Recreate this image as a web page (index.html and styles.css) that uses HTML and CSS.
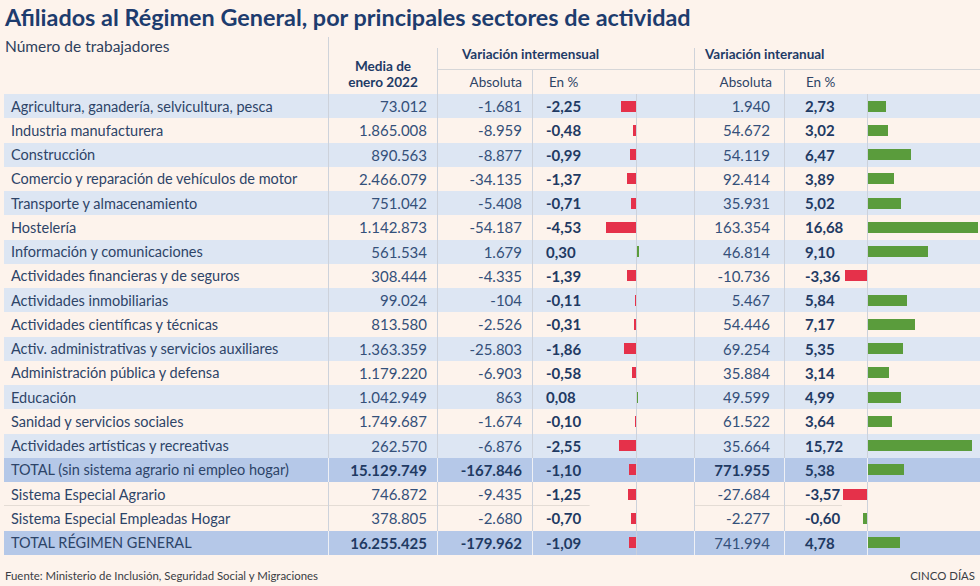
FILE: index.html
```html
<!DOCTYPE html>
<html lang="es">
<head>
<meta charset="utf-8">
<title>Afiliados al Régimen General</title>
<link rel="stylesheet" href="styles.css">
</head>
<body>
<div class="page">
  <h1 class="title">Afiliados al Régimen General, por principales sectores de actividad</h1>
  <div class="head">
    <div class="h-lab">Número de trabajadores</div>
    <div class="h-media"><span>Media de</span><span>enero 2022</span></div>
    <div class="h-group g1">Variación intermensual</div>
    <div class="h-group g2">Variación interanual</div>
    <div class="h-sub s-abs">Absoluta</div>
    <div class="h-sub s-pct">En %</div>
    <div class="h-sub s-fill"></div>
    <div class="h-sub s-abs2">Absoluta</div>
    <div class="h-sub s-pct2">En %</div>
    <div class="h-sub s-last"></div>
  </div>
  <div class="body">
    <div class="row alt"><div class="c lab">Agricultura, ganadería, selvicultura, pesca</div><div class="c num">73.012</div><div class="c num">-1.681</div><div class="c pct"><b>-2,25</b><i class="bar neg" style="width:14.9px"></i></div><div class="c fill"></div><div class="c num2">1.940</div><div class="c pct2"><b>2,73</b></div><div class="c last"><i class="bar pos" style="width:18px"></i></div></div>
    <div class="row"><div class="c lab">Industria manufacturera</div><div class="c num">1.865.008</div><div class="c num">-8.959</div><div class="c pct"><b>-0,48</b><i class="bar neg" style="width:3.2px"></i></div><div class="c fill"></div><div class="c num2">54.672</div><div class="c pct2"><b>3,02</b></div><div class="c last"><i class="bar pos" style="width:19.9px"></i></div></div>
    <div class="row alt"><div class="c lab">Construcción</div><div class="c num">890.563</div><div class="c num">-8.877</div><div class="c pct"><b>-0,99</b><i class="bar neg" style="width:6.5px"></i></div><div class="c fill"></div><div class="c num2">54.119</div><div class="c pct2"><b>6,47</b></div><div class="c last"><i class="bar pos" style="width:42.7px"></i></div></div>
    <div class="row"><div class="c lab">Comercio y reparación de vehículos de motor</div><div class="c num">2.466.079</div><div class="c num">-34.135</div><div class="c pct"><b>-1,37</b><i class="bar neg" style="width:9px"></i></div><div class="c fill"></div><div class="c num2">92.414</div><div class="c pct2"><b>3,89</b></div><div class="c last"><i class="bar pos" style="width:25.7px"></i></div></div>
    <div class="row alt"><div class="c lab">Transporte y almacenamiento</div><div class="c num">751.042</div><div class="c num">-5.408</div><div class="c pct"><b>-0,71</b><i class="bar neg" style="width:4.7px"></i></div><div class="c fill"></div><div class="c num2">35.931</div><div class="c pct2"><b>5,02</b></div><div class="c last"><i class="bar pos" style="width:33.1px"></i></div></div>
    <div class="row"><div class="c lab">Hostelería</div><div class="c num">1.142.873</div><div class="c num">-54.187</div><div class="c pct"><b>-4,53</b><i class="bar neg" style="width:29.9px"></i></div><div class="c fill"></div><div class="c num2">163.354</div><div class="c pct2"><b>16,68</b></div><div class="c last"><i class="bar pos" style="width:110px"></i></div></div>
    <div class="row alt"><div class="c lab">Información y comunicaciones</div><div class="c num">561.534</div><div class="c num">1.679</div><div class="c pct"><b>0,30</b></div><div class="c fill"><i class="bar pos" style="width:2px"></i></div><div class="c num2">46.814</div><div class="c pct2"><b>9,10</b></div><div class="c last"><i class="bar pos" style="width:60px"></i></div></div>
    <div class="row"><div class="c lab">Actividades financieras y de seguros</div><div class="c num">308.444</div><div class="c num">-4.335</div><div class="c pct"><b>-1,39</b><i class="bar neg" style="width:9.2px"></i></div><div class="c fill"></div><div class="c num2">-10.736</div><div class="c pct2"><b>-3,36</b><i class="bar neg" style="width:22.2px"></i></div><div class="c last"></div></div>
    <div class="row alt"><div class="c lab">Actividades inmobiliarias</div><div class="c num">99.024</div><div class="c num">-104</div><div class="c pct"><b>-0,11</b><i class="bar neg" style="width:0.7px"></i></div><div class="c fill"></div><div class="c num2">5.467</div><div class="c pct2"><b>5,84</b></div><div class="c last"><i class="bar pos" style="width:38.5px"></i></div></div>
    <div class="row"><div class="c lab">Actividades científicas y técnicas</div><div class="c num">813.580</div><div class="c num">-2.526</div><div class="c pct"><b>-0,31</b><i class="bar neg" style="width:2px"></i></div><div class="c fill"></div><div class="c num2">54.446</div><div class="c pct2"><b>7,17</b></div><div class="c last"><i class="bar pos" style="width:47.3px"></i></div></div>
    <div class="row alt"><div class="c lab">Activ. administrativas y servicios auxiliares</div><div class="c num">1.363.359</div><div class="c num">-25.803</div><div class="c pct"><b>-1,86</b><i class="bar neg" style="width:12.3px"></i></div><div class="c fill"></div><div class="c num2">69.254</div><div class="c pct2"><b>5,35</b></div><div class="c last"><i class="bar pos" style="width:35.3px"></i></div></div>
    <div class="row"><div class="c lab">Administración pública y defensa</div><div class="c num">1.179.220</div><div class="c num">-6.903</div><div class="c pct"><b>-0,58</b><i class="bar neg" style="width:3.8px"></i></div><div class="c fill"></div><div class="c num2">35.884</div><div class="c pct2"><b>3,14</b></div><div class="c last"><i class="bar pos" style="width:20.7px"></i></div></div>
    <div class="row alt"><div class="c lab">Educación</div><div class="c num">1.042.949</div><div class="c num">863</div><div class="c pct"><b>0,08</b></div><div class="c fill"><i class="bar pos" style="width:0.5px"></i></div><div class="c num2">49.599</div><div class="c pct2"><b>4,99</b></div><div class="c last"><i class="bar pos" style="width:32.9px"></i></div></div>
    <div class="row"><div class="c lab">Sanidad y servicios sociales</div><div class="c num">1.749.687</div><div class="c num">-1.674</div><div class="c pct"><b>-0,10</b><i class="bar neg" style="width:0.7px"></i></div><div class="c fill"></div><div class="c num2">61.522</div><div class="c pct2"><b>3,64</b></div><div class="c last"><i class="bar pos" style="width:24px"></i></div></div>
    <div class="row alt"><div class="c lab">Actividades artísticas y recreativas</div><div class="c num">262.570</div><div class="c num">-6.876</div><div class="c pct"><b>-2,55</b><i class="bar neg" style="width:16.8px"></i></div><div class="c fill"></div><div class="c num2">35.664</div><div class="c pct2"><b>15,72</b></div><div class="c last"><i class="bar pos" style="width:103.8px"></i></div></div>
    <div class="row total"><div class="c lab">TOTAL (sin sistema agrario ni empleo hogar)</div><div class="c num"><b>15.129.749</b></div><div class="c num"><b>-167.846</b></div><div class="c pct"><b>-1,10</b><i class="bar neg" style="width:7.3px"></i></div><div class="c fill"></div><div class="c num2"><b>771.955</b></div><div class="c pct2"><b>5,38</b></div><div class="c last"><i class="bar pos" style="width:35.5px"></i></div></div>
    <div class="row ruled"><div class="c lab">Sistema Especial Agrario</div><div class="c num">746.872</div><div class="c num">-9.435</div><div class="c pct"><b>-1,25</b><i class="bar neg" style="width:8.3px"></i></div><div class="c fill"></div><div class="c num2">-27.684</div><div class="c pct2"><b>-3,57</b><i class="bar neg" style="width:23.6px"></i></div><div class="c last"></div></div>
    <div class="row"><div class="c lab">Sistema Especial Empleadas Hogar</div><div class="c num">378.805</div><div class="c num">-2.680</div><div class="c pct"><b>-0,70</b><i class="bar neg" style="width:4.6px"></i></div><div class="c fill"></div><div class="c num2">-2.277</div><div class="c pct2"><b>-0,60</b><i class="bar pos" style="width:4px"></i></div><div class="c last"></div></div>
    <div class="row total"><div class="c lab">TOTAL RÉGIMEN GENERAL</div><div class="c num"><b>16.255.425</b></div><div class="c num"><b>-179.962</b></div><div class="c pct"><b>-1,09</b><i class="bar neg" style="width:7.2px"></i></div><div class="c fill"></div><div class="c num2">741.994</div><div class="c pct2"><b>4,78</b></div><div class="c last"><i class="bar pos" style="width:31.5px"></i></div></div>
  </div>
  <div class="foot">
    <span>Fuente: Ministerio de Inclusión, Seguridad Social y Migraciones</span>
    <span>CINCO DÍAS</span>
  </div>
</div>
</body>
</html>
```
FILE: styles.css
```css
html, body {
  margin: 0;
  padding: 0;
  background: #fdf3ec;
}
body {
  font-family: "Lato", "Liberation Sans", sans-serif;
  color: #2c4468;
  width: 980px;
  height: 586px;
  overflow: hidden;
}
.page {
  padding: 0 0 0 4px;
}
.title {
  margin: 0;
  padding: 3px 0 0 1px;
  height: 34px;
  box-sizing: border-box;
  font-size: 23.4px;
  line-height: 28px;
  font-weight: 700;
  color: #1d3c6e;
  white-space: nowrap;
}
.head {
  display: grid;
  grid-template-columns: 325px 109px 95px 104px 58px 90px 83px 1fr;
  grid-template-rows: 33px 24px;
  height: 57px;
  margin-top: 3px;
}
.h-lab {
  grid-column: 1;
  grid-row: 1 / 3;
  font-size: 15.5px;
  line-height: 18px;
  padding-left: 1px;
  border-right: 1px solid #cfd3da;
  color: #2e3f5c;
}
.h-media {
  grid-column: 2;
  grid-row: 1 / 3;
  margin-top: 11px;
  border-right: 1px solid #cfd3da;
  display: flex;
  flex-direction: column;
  align-items: center;
  justify-content: flex-end;
  font-size: 13.6px;
  line-height: 16px;
  font-weight: 700;
  color: #1f3b66;
  padding-bottom: 4px;
}
.h-media span {
  display: block;
  height: 16px;
}
.h-group {
  grid-row: 1;
  margin-top: 11px;
  border-bottom: 1px solid #d6d6d8;
  font-size: 13.5px;
  line-height: 12px;
  font-weight: 700;
  color: #1f3b66;
}
.g1 {
  grid-column: 3 / 6;
  padding-left: 24px;
  border-right: 1px solid #cfd3da;
}
.g2 {
  grid-column: 6 / 9;
  padding-left: 10px;
}
.h-sub {
  grid-row: 2;
  font-size: 13.5px;
  line-height: 24px;
  color: #2e4466;
}
.s-abs { grid-column: 3; text-align: right; padding-right: 10px; border-right: 1px solid #cfd3da; }
.s-pct { grid-column: 4; padding-left: 16px; }
.s-fill { grid-column: 5; border-right: 1px solid #cfd3da; }
.s-abs2 { grid-column: 6; text-align: right; padding-right: 12px; border-right: 1px solid #cfd3da; }
.s-pct2 { grid-column: 7; padding-left: 21px; }
.s-last { grid-column: 8; }

.row {
  display: grid;
  grid-template-columns: 325px 109px 95px 104px 58px 90px 83px 1fr;
  height: 24.26px;
}
.row.alt { background: #dde6f3; }
.row.total { background: #b5c8e8; }
.c {
  border-right: 1px solid #cdd2db;
  display: flex;
  align-items: center;
  box-sizing: border-box;
  white-space: nowrap;
  color: #34507a;
}
.row.total .c { border-right-color: #eef0f5; }
.row.total .c.pct { border-right-color: #c9cfdc; }
.c.last { border-right: none; }
.lab {
  padding-left: 7px;
  font-size: 14.5px;
  color: #2d4468;
}
.num {
  justify-content: flex-end;
  padding-right: 10px;
  font-size: 15px;
}
.num2 {
  justify-content: flex-end;
  padding-right: 14px;
  font-size: 15px;
}
.pct {
  justify-content: space-between;
  padding-left: 13px;
  font-size: 15px;
}
.pct2 {
  justify-content: space-between;
  padding-left: 20px;
  font-size: 15px;
}
.c b {
  font-weight: 700;
  color: #1f3a63;
}
.bar {
  display: block;
  height: 11px;
  flex: none;
}
.bar.neg { background: #e5314a; }
.bar.pos { background: #5a9c3c; }
.row.ruled .lab,
.row.ruled .num,
.row.ruled .num2 {
  box-shadow: inset 0 -1px 0 #e4dcd5;
}
.row.ruled .pct {
  background: linear-gradient(#e4dcd5, #e4dcd5) left bottom / 55% 1px no-repeat;
}
.row.ruled .pct2 {
  background: linear-gradient(#e4dcd5, #e4dcd5) left bottom / 70% 1px no-repeat;
}
.foot {
  display: flex;
  justify-content: space-between;
  padding: 13px 5px 0 1px;
  font-size: 11.4px;
  line-height: 16px;
  color: #3a3d44;
}
```
